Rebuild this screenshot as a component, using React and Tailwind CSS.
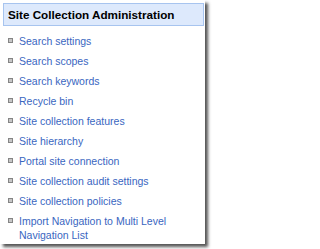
import React from 'react';

const items = [
  'Search settings',
  'Search scopes',
  'Search keywords',
  'Recycle bin',
  'Site collection features',
  'Site hierarchy',
  'Portal site connection',
  'Site collection audit settings',
  'Site collection policies',
  'Import Navigation to Multi Level Navigation List',
];

const App = () => {
  return (
    <div className="w-[210px] h-[249px] bg-white font-['Liberation_Sans',Arial,sans-serif]">
      <div className="w-[205px] h-[244px] bg-white shadow-[3px_3px_3px_#555] pt-[3px] pl-[3px]">
        <div className="w-[201px] h-[23px] bg-[#dde9fc] border border-[#a7c4ef] flex items-center pl-[4px]">
          <span className="text-[11.7px] font-bold text-black leading-none">Site Collection Administration</span>
        </div>
        <ul className="pt-[5px]">
          {items.map((item) => (
            <li key={item} className="flex items-start pl-[5px] py-[3px]">
              <span className="mt-[4px] w-[5px] h-[5px] shrink-0 bg-[#c6c6c6] border border-[#858585]" />
              <a href="#" className="ml-[6px] pr-[28px] text-[10.5px] leading-[14px] text-[#3966bf]">
                {item}
              </a>
            </li>
          ))}
        </ul>
      </div>
    </div>
  );
};

export default App;
